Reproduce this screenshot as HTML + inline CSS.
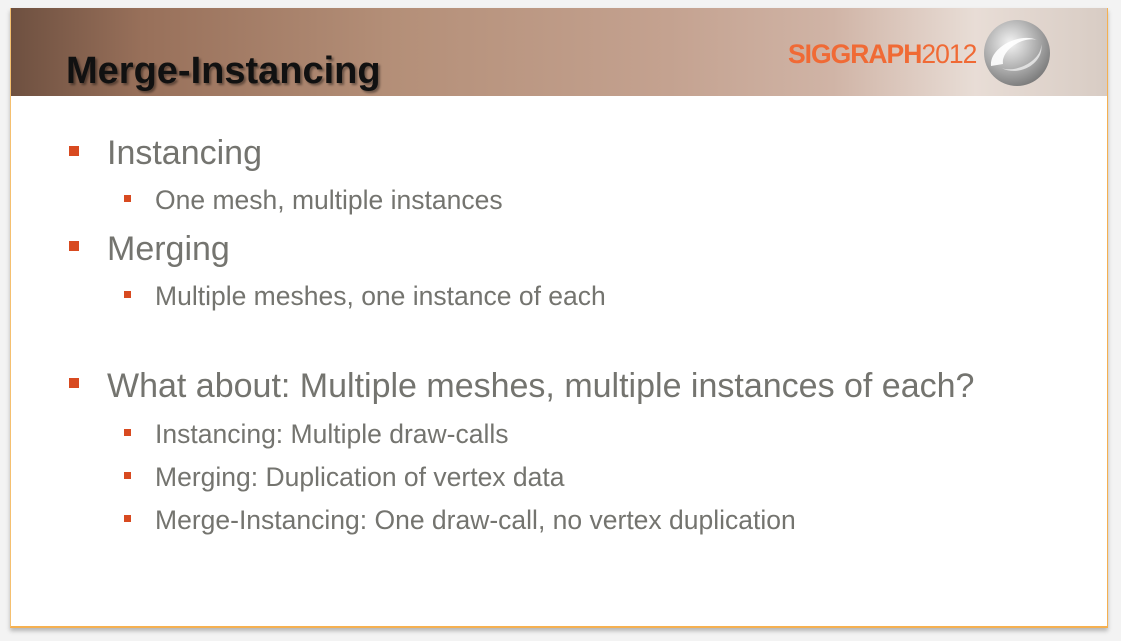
<!DOCTYPE html>
<html><head><style>
body{margin:0;width:1121px;height:641px;background:#f3f3f3;position:relative;overflow:hidden;font-family:"Liberation Sans",Arial,sans-serif}
.slide{position:absolute;left:10px;top:8px;width:1096px;height:618px;background:#fff;border-right:1px solid #f5b050;border-left:1px solid #f5c070;border-bottom:2px solid #f5b050;box-shadow:0 3px 4px rgba(0,0,0,.25)}
.hdr{position:absolute;left:0;top:0;width:1096px;height:88px;background:linear-gradient(90deg,#6e5040 0%,#98705a 12%,#b48f78 35%,#c4a290 60%,#d0b4a6 75%,#e8ddd6 88%,#d8ccc4 100%)}
.title{position:absolute;left:55px;top:42px;font-weight:bold;font-size:38px;color:#111;text-shadow:2px 2px 2px rgba(0,0,0,.4)}
.logo{position:absolute;left:777px;top:31px;font-size:26.5px;color:#f06a35;letter-spacing:-1px}
.logo b{font-weight:bold}
.t{position:absolute;color:#74746f;white-space:nowrap}
.l1{font-size:34px;left:96px}
.l2{font-size:26.5px;left:144px}
.b{position:absolute;background:#d84a20}
.b1{width:10px;height:10px;left:58px}
.b2{width:7px;height:7px;left:113px}
</style></head><body>
<div class="slide">
<div class="hdr">
<div class="title">Merge-Instancing</div>
<div class="logo"><b>SIGGRAPH</b>2012</div>
<svg style="position:absolute;left:968px;top:10px" width="74" height="70" viewBox="0 0 74 70">
<defs><radialGradient id="g" cx="40%" cy="35%" r="70%"><stop offset="0" stop-color="#f4f4f4"/><stop offset=".6" stop-color="#aaa"/><stop offset="1" stop-color="#777"/></radialGradient></defs>
<ellipse cx="38" cy="35" rx="33" ry="33" fill="url(#g)"/>
<path d="M12 48 C10 30 40 14 58 22 C44 18 22 32 24 46 Z" fill="#fff" opacity=".9"/>
<path d="M22 50 C40 56 64 40 62 26 C66 42 44 60 22 50 Z" fill="#eee" opacity=".8"/>
</svg>
</div>
<div class="b b1" style="top:138px"></div><div class="t l1" style="top:126px">Instancing</div>
<div class="b b2" style="top:187px"></div><div class="t l2" style="top:177px">One mesh, multiple instances</div>
<div class="b b1" style="top:233px"></div><div class="t l1" style="top:222px">Merging</div>
<div class="b b2" style="top:283px"></div><div class="t l2" style="top:273px">Multiple meshes, one instance of each</div>
<div class="b b1" style="top:370px"></div><div class="t l1" style="top:359px">What about: Multiple meshes, multiple instances of each?</div>
<div class="b b2" style="top:421px"></div><div class="t l2" style="top:411px">Instancing: Multiple draw-calls</div>
<div class="b b2" style="top:464px"></div><div class="t l2" style="top:454px">Merging: Duplication of vertex data</div>
<div class="b b2" style="top:507px"></div><div class="t l2" style="top:497px">Merge-Instancing: One draw-call, no vertex duplication</div>
</div>
</body></html>
